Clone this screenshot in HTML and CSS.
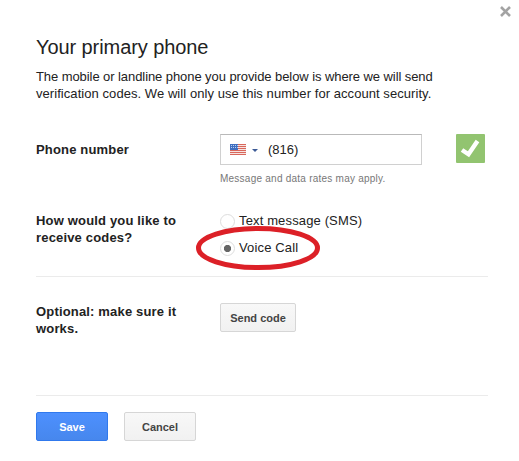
FILE: index.html
```html
<!DOCTYPE html>
<html lang="en">
<head>
    <meta charset="UTF-8">
    <title>Your primary phone</title>
    <link rel="stylesheet" href="styles.css">
</head>
<body>
<div class="dialog">
    <button class="close" aria-label="Close">
        <svg width="11" height="11" viewBox="0 0 11 11"><path d="M1 1L10 10M10 1L1 10" stroke="#a3a3a3" stroke-width="2.6"/></svg>
    </button>
    <h1>Your primary phone</h1>
    <p class="intro"><span class="tight">The mobile or landline phone you provide below is where we will send</span><br>verification codes. We will only use this number for account security.</p>

    <div class="row phone">
        <div class="label">Phone number</div>
        <div class="field">
            <div class="input">
                <svg class="flag" width="16" height="11" viewBox="0 0 16 11">
                    <rect width="16" height="11" fill="#f6e3e0"/>
                    <path d="M0 .5H16M0 2.5H16M0 4.5H16M0 6.5H16M0 8.5H16M0 10.5H16" stroke="#d9675c"/>
                    <rect width="8" height="6" fill="#3f6fc0"/>
                    <path d="M1 1.5H8M1 3.5H8" stroke="#b9cdf0" stroke-dasharray="1 1"/>
                </svg>
                <span class="arrow"></span>
                <span>(816)</span>
            </div>
            <div class="hint">Message and data rates may apply.</div>
        </div>
        <div class="check">
            <svg width="29" height="29" viewBox="0 0 29 29"><path d="M6 16L12.5 20.3L21.5 7" fill="none" stroke="#fff" stroke-width="4.4"/></svg>
        </div>
    </div>

    <div class="row method">
        <div class="label">How would you like to<br>receive codes?</div>
        <div class="options">
            <div class="option"><span class="radio"></span><span>Text message (SMS)</span></div>
            <div class="option"><span class="radio on"></span><span>Voice Call</span></div>
            <svg class="circle" width="126" height="46" viewBox="0 0 126 46"><ellipse cx="63" cy="23" rx="59.5" ry="19.5" fill="none" stroke="#dc2027" stroke-width="5"/></svg>
        </div>
    </div>

    <div class="row test">
        <div class="label">Optional: make sure it<br>works.</div>
        <button class="but send">Send code</button>
    </div>

    <div class="buttons">
        <button class="but save">Save</button>
        <button class="but">Cancel</button>
    </div>
</div>
</body>
</html>
```
FILE: styles.css
```css
*{
    box-sizing: border-box;
    margin: 0;
    padding: 0;
}
body{
    background-color: #fff;
    color: #222;
    font-family: "Liberation Sans", Arial, sans-serif;
    font-size: 13px;
    line-height: 17px;
}
svg{
    display: block;
}
.dialog{
    position: relative;
    width: 519px;
    height: 461px;
    padding: 35px 31px 0 36px;
}
.close{
    position: absolute;
    top: 6px;
    right: 8px;
    border: none;
    background: none;
}
h1{
    font-size: 20px;
    font-weight: normal;
    line-height: 24px;
    letter-spacing: -0.08px;
}
.intro{
    height: 66px;
    padding-top: 9px;
    letter-spacing: 0.06px;
}
.tight{
    letter-spacing: -0.075px;
}
.row{
    display: flex;
    width: 452px;
}
.label{
    width: 184px;
    font-weight: bold;
    letter-spacing: 0.17px;
}
.phone{
    height: 78px;
    padding-top: 9px;
}
.phone .label{
    padding-top: 7px;
}
.field{
    width: 236px;
}
.input{
    display: flex;
    align-items: center;
    width: 202px;
    height: 31px;
    padding-left: 9px;
    border: 1px solid #d0d0d0;
    border-top-color: #b9b9b9;
}
.arrow{
    margin: 1px 10px 0 6px;
    border: 3px solid transparent;
    border-top-color: #3c5a96;
    border-bottom: none;
}
.hint{
    padding-top: 5px;
    color: #777;
    font-size: 10px;
    letter-spacing: 0.24px;
}
.check{
    width: 29px;
    height: 29px;
    border-radius: 1px;
    background-color: #92c470;
}
.method{
    height: 74px;
    padding-top: 9px;
    border-bottom: 1px solid #ebebeb;
}
.options{
    position: relative;
    letter-spacing: 0.14px;
}
.option{
    display: flex;
    height: 27px;
}
.radio{
    width: 15px;
    height: 15px;
    margin: 2px 4px 0 0;
    border: 1px solid #ddd;
    border-radius: 50%;
}
.on{
    background: radial-gradient(circle, #666 3.2px, transparent 4px);
}
.circle{
    position: absolute;
    top: 13px;
    left: -25px;
}
.test{
    height: 119px;
    padding-top: 26px;
    border-bottom: 1px solid #ebebeb;
}
.buttons{
    display: flex;
    gap: 16px;
    padding-top: 16px;
}
.but{
    width: 72px;
    height: 29px;
    border: 1px solid #d6d6d6;
    border-radius: 2px;
    background: linear-gradient(#f8f8f8, #f1f1f1);
    color: #444;
    font-family: inherit;
    font-size: 11px;
    font-weight: bold;
}
.send{
    width: 76px;
}
.save{
    border-color: #3079ed;
    background: linear-gradient(#4d90fe, #4787ed);
    color: #fff;
}
```
